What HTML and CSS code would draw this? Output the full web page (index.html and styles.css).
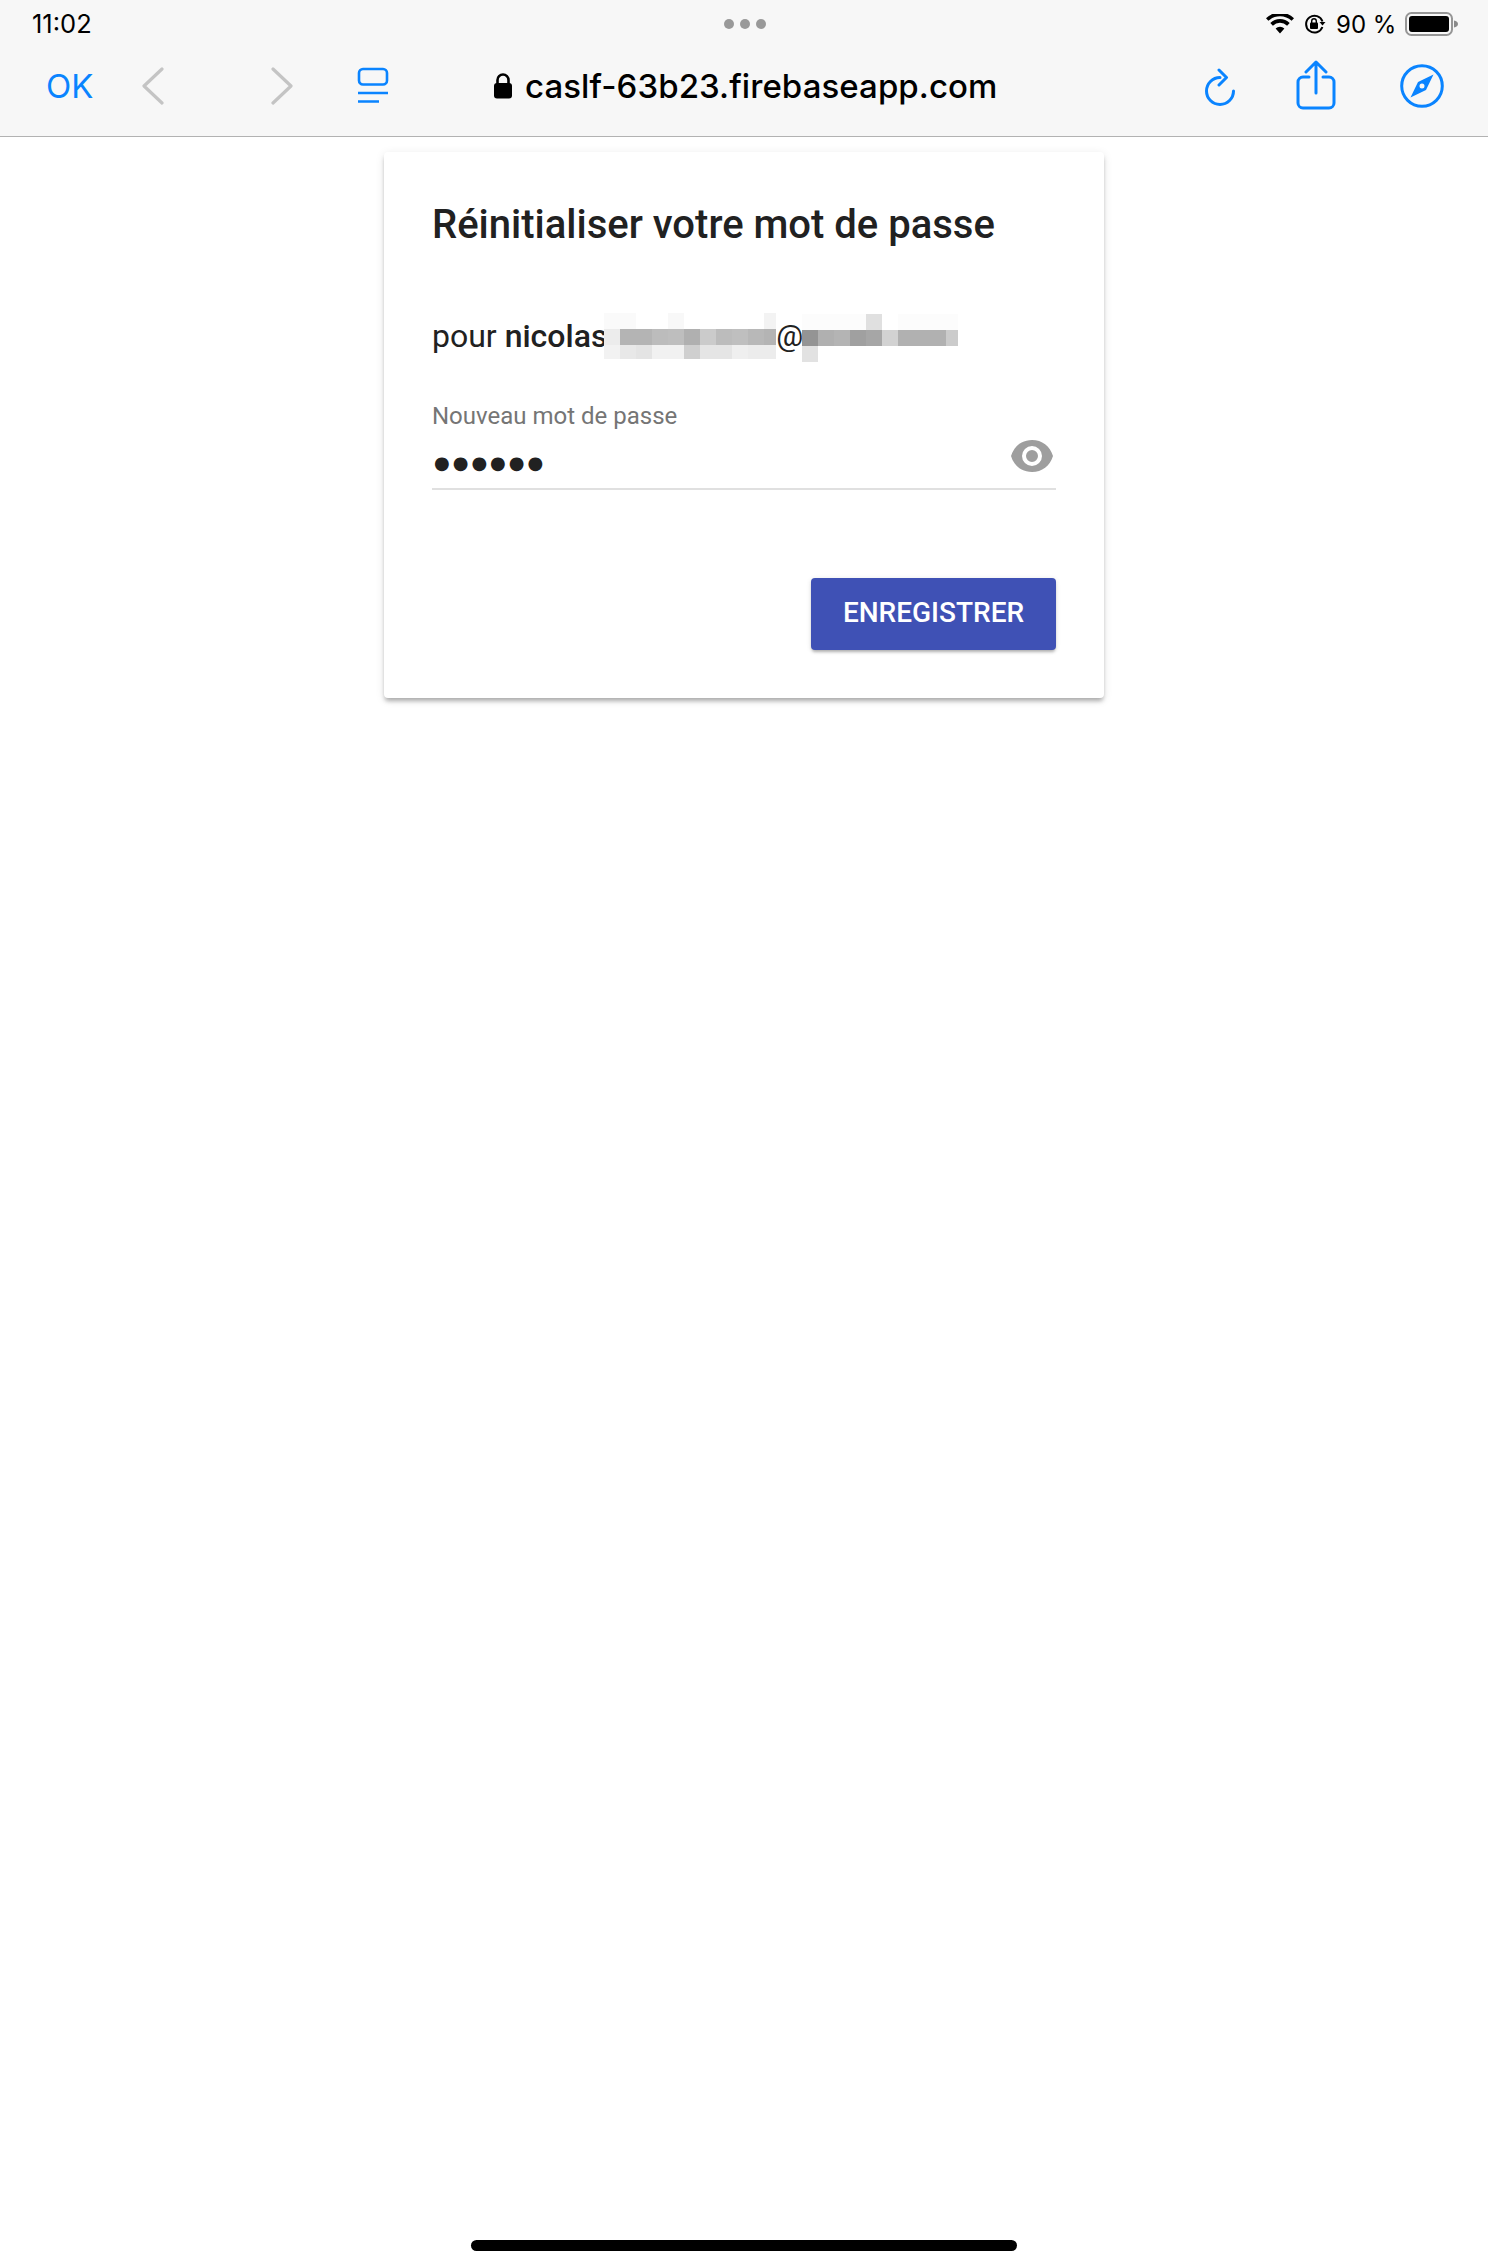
FILE: index.html
```html
<!DOCTYPE html>
<html lang="fr">
<head>
<meta charset="utf-8">
<title>Réinitialiser votre mot de passe</title>
<link rel="stylesheet" href="styles.css">
</head>
<body>
<header class="chrome">
  <div class="status">
    <span class="time">11:02</span>
    <svg class="dots" width="42" height="10" viewBox="0 0 42 10"><circle cx="5" cy="5" r="5"/><circle cx="21" cy="5" r="5"/><circle cx="37" cy="5" r="5"/></svg>
    <div class="status-right">
      <svg class="wifi" width="28" height="20" viewBox="0 0 28 20"><path d="M14 19.5 9.6 14.6a6.4 6.4 0 0 1 8.8 0zM6.9 11.7 4.3 8.9a14 14 0 0 1 19.4 0l-2.6 2.8a10.2 10.2 0 0 0-14.2 0zM2.4 6.8 0 4.2a20.4 20.4 0 0 1 28 0l-2.4 2.6a17 17 0 0 0-23.2 0z"/></svg>
      <svg class="rotlock" width="22" height="20" viewBox="0 0 22 20"><path d="M18.5 7.5A8.4 8.4 0 1 0 18.4 13" fill="none" stroke="#000" stroke-width="2"/><path d="M15.5 8h6l-3 3.6z"/><rect x="6" y="8.5" width="8" height="6.5" rx="1"/><path d="M7.7 9V7a2.3 2.3 0 0 1 4.600 0v2" fill="none" stroke="#000" stroke-width="1.400"/></svg>
      <span class="pct">90 %</span>
      <svg class="battery" width="53" height="24" viewBox="0 0 53 24"><rect x="1" y="1" width="46" height="22" rx="5.500" fill="none" stroke="#969696" stroke-width="2"/><rect x="4" y="4" width="40" height="16" rx="3"/><path d="M49 8.500c2.500.5 4 1.800 4 3.500s-1.500 3-4 3.500z" fill="#8a8a8a"/></svg>
    </div>
  </div>
  <div class="toolbar">
    <span class="ok">OK</span>
    <svg class="chev back" width="24" height="38" viewBox="0 0 24 38"><path d="M21 2 3 19l18 17"/></svg>
    <svg class="chev fwd" width="24" height="38" viewBox="0 0 24 38"><path d="M3 2l18 17L3 36"/></svg>
    <svg class="tabs" width="32" height="38" viewBox="0 0 32 38"><rect x="2" y="2" width="28" height="15.500" rx="4"/><path d="M1 26h30M1 34.500h21"/></svg>
    <div class="address">
      <svg class="lock" width="20" height="26" viewBox="0 0 20 26"><path d="M4.500 11V7a5.500 5.500 0 0 1 11 0v4" fill="none" stroke="#000" stroke-width="2.600"/><rect x="1" y="10" width="18" height="15.500" rx="3"/></svg>
      <span class="domain">caslf-63b23.firebaseapp.com</span>
    </div>
    <svg class="ic reload" width="32" height="40" viewBox="0 0 32 40"><path d="M29.500 23A13.500 13.500 0 1 1 16 9.500"/><path d="M15 2l7.500 7.500L15 17"/></svg>
    <svg class="ic share" width="40" height="50" viewBox="0 0 40 50"><path d="M13 17H7a5 5 0 0 0-5 5v21a5 5 0 0 0 5 5h26a5 5 0 0 0 5-5V22a5 5 0 0 0-5-5h-6"/><path d="M20 33V3M10 12l10-10 10 10"/></svg>
    <svg class="compass" width="44" height="44" viewBox="0 0 44 44"><circle cx="22" cy="22" r="20.300" fill="none" stroke="#0a84ff" stroke-width="3"/><path fill="#0a84ff" fill-rule="evenodd" d="M33.500 10.500 26 26 10.500 33.500 18 18zM22 19.500a2.500 2.500 0 1 0 0 5 2.500 2.500 0 0 0 0-5z"/></svg>
  </div>
</header>

<main class="card">
  <h1 class="title">Réinitialiser votre mot de passe</h1>
  <p class="for">
    <span>pour <b>nicolas</b></span>
    <svg class="mosaic m1" width="172" height="46" viewBox="0 0 172 46" shape-rendering="crispEdges">
      <rect x="0" y="0" width="32" height="16" fill="#fafafa"/><rect x="64" y="0" width="16" height="16" fill="#f8f8f8"/><rect x="160" y="0" width="12" height="16" fill="#f3f3f3"/>
      <rect x="0" y="16" width="16" height="16" fill="#ececec"/><rect x="16" y="16" width="32" height="16" fill="#b4b4b4"/><rect x="48" y="16" width="16" height="16" fill="#bcbcbc"/><rect x="64" y="16" width="16" height="16" fill="#bebebe"/><rect x="80" y="16" width="16" height="16" fill="#b0b0b0"/><rect x="96" y="16" width="16" height="16" fill="#cbcbcb"/><rect x="112" y="16" width="16" height="16" fill="#bcbcbc"/><rect x="128" y="16" width="16" height="16" fill="#bfbfbf"/><rect x="144" y="16" width="16" height="16" fill="#b8b8b8"/><rect x="160" y="16" width="12" height="16" fill="#b4b4b4"/>
      <rect x="0" y="32" width="16" height="14" fill="#f2f2f2"/><rect x="16" y="32" width="16" height="14" fill="#e8e8e8"/><rect x="32" y="32" width="16" height="14" fill="#e4e4e4"/><rect x="48" y="32" width="32" height="14" fill="#f1f1f1"/><rect x="80" y="32" width="16" height="14" fill="#cfcfcf"/><rect x="96" y="32" width="32" height="14" fill="#e5e5e5"/><rect x="128" y="32" width="16" height="14" fill="#efefef"/><rect x="144" y="32" width="28" height="14" fill="#ececec"/>
    </svg>
    <span class="at">@</span>
    <svg class="mosaic m2" width="156" height="48" viewBox="0 0 156 48" shape-rendering="crispEdges">
      <rect x="0" y="0" width="64" height="16" fill="#fcfcfc"/><rect x="64" y="0" width="16" height="16" fill="#e0e0e0"/><rect x="96" y="0" width="60" height="16" fill="#fcfcfc"/>
      <rect x="0" y="16" width="16" height="16" fill="#949494"/><rect x="16" y="16" width="16" height="16" fill="#b0b0b0"/><rect x="32" y="16" width="16" height="16" fill="#b4b4b4"/><rect x="48" y="16" width="16" height="16" fill="#a0a0a0"/><rect x="64" y="16" width="16" height="16" fill="#a6a6a6"/><rect x="80" y="16" width="16" height="16" fill="#d2d2d2"/><rect x="96" y="16" width="48" height="16" fill="#b1b1b1"/><rect x="144" y="16" width="12" height="16" fill="#cbcbcb"/>
      <rect x="0" y="32" width="16" height="16" fill="#e2e2e2"/>
    </svg>
  </p>
  <div class="field">
    <label class="label" for="pw">Nouveau mot de passe</label>
    <div class="input-row">
      <span class="pw" id="pw">●●●●●●</span>
      <svg class="eye" width="44" height="32" viewBox="0 0 44 32"><path fill="#9e9e9e" fill-rule="evenodd" d="M22 0C12 0 4 6 1 16c3 10 11 16 21 16s18-6 21-16C40 6 32 0 22 0zm0 26a10 10 0 1 1 0-20 10 10 0 0 1 0 20zm0-16a6 6 0 1 0 0 12 6 6 0 0 0 0-12z"/></svg>
    </div>
  </div>
  <div class="actions"><button class="save" type="button">ENREGISTRER</button></div>
</main>

<div class="home"></div>
</body>
</html>
```
FILE: styles.css
```css
* { box-sizing: border-box; }
html, body { margin: 0; padding: 0; }
body {
  width: 1488px;
  height: 2266px;
  background: #fff;
  display: flex;
  flex-direction: column;
  overflow: hidden;
  font-family: Roboto, "Liberation Sans", sans-serif;
  color: #212121;
}
.chrome {
  height: 137px;
  background: #f7f7f7;
  border-bottom: 1px solid #b2b2b2;
  font-family: Inter, "Liberation Sans", sans-serif;
  color: #000;
}
.status {
  height: 48px;
  display: grid;
  grid-template-columns: 1fr auto 1fr;
  align-items: center;
  padding: 0 30px 0 32px;
}
.time { font-size: 25.500px; line-height: 48px; }
.dots { fill: #999; display: block; }
.status-right { display: flex; justify-content: flex-end; align-items: center; }
.status-right svg { display: block; }
.rotlock { margin-left: 10px; }
.pct { font-size: 24px; margin-left: 10px; width: 61px; white-space: nowrap; }
.battery { margin-left: 8px; }
.toolbar {
  height: 76px;
  display: flex;
  align-items: center;
  padding-left: 46px;
}
.toolbar svg { display: block; flex: none; }
.ok { font-size: 33px; color: #0a84ff; width: 46px; line-height: 76px; }
.chev { fill: none; stroke: #c4c4c4; stroke-width: 3.200; stroke-linecap: round; stroke-linejoin: round; }
.back { margin-left: 49px; }
.fwd { margin-left: 105px; }
.tabs { fill: none; stroke: #0a84ff; stroke-width: 2.600; margin-left: 63px; }
.address { display: flex; align-items: center; margin-left: 104px; width: 508px; }
.lock { margin-right: 12px; }
.domain { font-size: 33px; font-weight: 500; letter-spacing: .07px; white-space: nowrap; line-height: 50px; }
.ic { fill: none; stroke: #0a84ff; stroke-width: 3; stroke-linecap: round; stroke-linejoin: round; }
.reload { margin: 3px 0 0 203px; }
.share { margin: 0 0 3px 60px; }
.compass { margin-left: 64px; }

.card {
  width: 720px;
  height: 546px;
  margin: 15px auto 0;
  padding: 49px 48px 0;
  background: #fff;
  border-radius: 4px;
  box-shadow: 0 4px 4px -1px rgba(0,0,0,.28), 0 2px 10px 0 rgba(0,0,0,.10);
}
.title {
  margin: 0;
  font-size: 40px;
  font-weight: 500;
  line-height: 48px;
  color: #212121;
}
.for {
  margin: 61px 0 0;
  font-size: 32px;
  line-height: 44px;
  display: flex;
  align-items: center;
  height: 52px;
}
.for b { font-weight: 500; }
.mosaic { display: block; flex: none; }
.m1 { margin-left: -3px; }
.at { font-size: 30px; width: 26px; padding-right: 2px; flex: none; text-align: center; }
.m2 { margin-top: 4px; }
.field { margin-top: 38px; }
.label { display: block; font-size: 24px; line-height: 32px; color: #757575; }
.input-row {
  display: flex;
  justify-content: space-between;
  align-items: flex-start;
  height: 58px;
  border-bottom: 2px solid #e0e0e0;
}
.pw { font-size: 18px; letter-spacing: 3px; line-height: 36px; margin: 13px 0 0 2px; color: #212121; font-family: "DejaVu Sans", sans-serif; }
.eye { display: block; margin: 8px 2px 0 0; filter: blur(.6px); }
.actions { display: flex; justify-content: flex-end; margin-top: 88px; }
.save {
  width: 245px;
  height: 72px;
  border: 0;
  border-radius: 4px;
  background: #3f51b5;
  color: #fff;
  font-family: Roboto, sans-serif;
  font-size: 28px;
  font-weight: 500;
  padding: 0 0 3px;
  box-shadow: 0 3px 3px -1px rgba(0,0,0,.25), 0 1px 5px 0 rgba(0,0,0,.12);
}
.home {
  width: 546px;
  height: 11px;
  margin: auto auto 15px;
  background: #000;
  border-radius: 6px;
}
```
